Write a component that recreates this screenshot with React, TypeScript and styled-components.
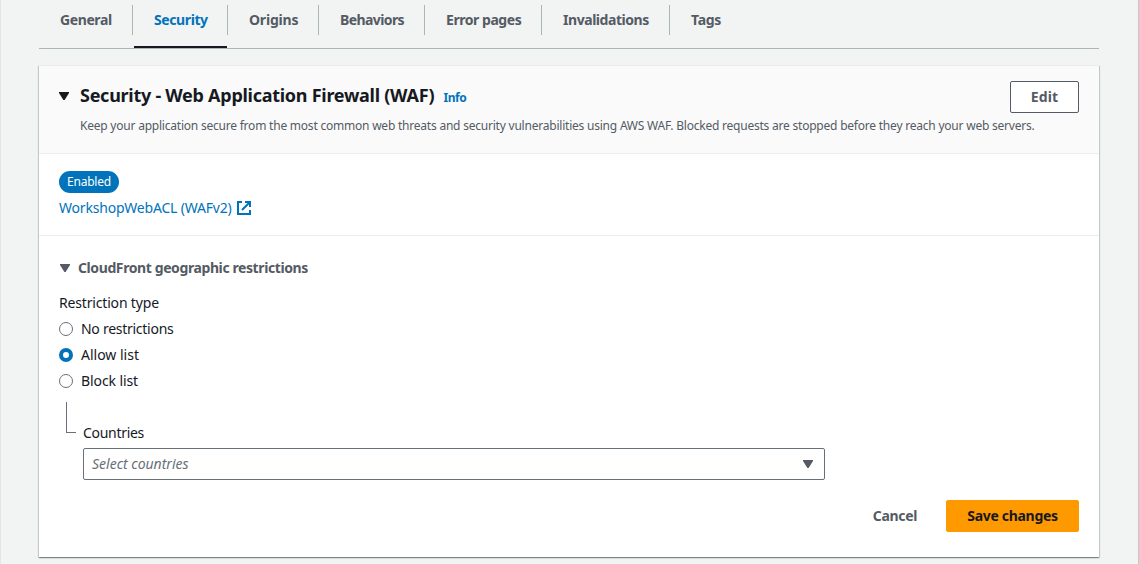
import React from "react";
import styled, { createGlobalStyle, css } from "styled-components";

const GlobalStyle = createGlobalStyle`
  *, *::before, *::after { box-sizing: border-box; }
  body {
    margin: 0;
    background: #f2f3f3;
    color: #16191f;
    font-family: "Noto Sans", "Open Sans", sans-serif;
    font-size: 14px;
    line-height: 22px;
  }
`;

const Page = styled.main`
  height: 564px;
  padding: 0 39px 0 38px;
  border-left: 1px solid #e3e6e6;
  border-right: 1px solid #c3c8c9;
  overflow: hidden;
`;

const Label = styled.span<{ $track?: number }>`
  white-space: nowrap;
  letter-spacing: ${(p) => p.$track ?? 0}px;
`;

const Tabs = styled.nav`
  display: flex;
  height: 49px;
  border-bottom: 1px solid #aab7b8;
`;

const Tab = styled.button<{ $width: number; $active?: boolean }>`
  display: flex;
  width: ${(p) => p.$width}px;
  height: 48px;
  padding: 5px 0 0;
  border: 0;
  background: none;
  font: inherit;
  font-weight: 700;
  color: ${(p) => (p.$active ? "#0073bb" : "#545b64")};
  position: relative;

  ${(p) =>
    p.$active &&
    css`
      &::after {
        content: "";
        position: absolute;
        left: 1px;
        right: 1px;
        bottom: 0;
        height: 2px;
        background: #16191f;
      }
    `}
`;

const TabText = styled.span<{ $last?: boolean }>`
  flex: 1;
  display: flex;
  align-items: center;
  height: 30px;
  padding-left: 21px;
  border-right: ${(p) => (p.$last ? "0" : "1px solid #aab7b8")};
`;

const Panel = styled.section`
  margin-top: 16px;
  height: 492px;
  border-top: 1px solid #eaeded;
  background: #fff;
  box-shadow: 0 1px 1px 0 rgba(0, 28, 36, 0.3), 1px 1px 1px 0 rgba(0, 28, 36, 0.15),
    -1px 1px 1px 0 rgba(0, 28, 36, 0.15);
`;

const PanelHeader = styled.header`
  display: flex;
  justify-content: space-between;
  height: 88px;
  padding: 15px 20px 0;
  border-bottom: 1px solid #eaeded;
  background: #fafafa;
`;

const HeaderMain = styled.div`
  display: flex;
  flex: 1;
  min-width: 0;
`;

const Caret = styled.svg<{ $top?: number; $left?: number }>`
  display: block;
  flex: none;
  width: 10px;
  height: 8px;
  margin-top: ${(p) => p.$top ?? 0}px;
  margin-left: ${(p) => p.$left ?? 0}px;
`;

const HeaderText = styled.div`
  margin-left: 11px;
`;

const TitleRow = styled.div`
  display: flex;
  align-items: baseline;
  gap: 9px;
`;

const Title = styled.h2`
  margin: 0;
  font-size: 18px;
  line-height: 28px;
  font-weight: 700;
`;

const InfoLink = styled.a`
  font-size: 12px;
  font-weight: 700;
  color: #0073bb;
`;

const Description = styled.p`
  margin: 6px 0 0;
  font-size: 12px;
  color: #545b64;
`;

const Button = styled.button<{ $kind: "normal" | "link" | "primary"; $width: number }>`
  flex: none;
  width: ${(p) => p.$width}px;
  height: 32px;
  padding: 0;
  border: 1px solid transparent;
  border-radius: 2px;
  font: inherit;
  font-weight: 700;
  color: #545b64;
  background: transparent;

  ${(p) =>
    p.$kind === "normal" &&
    css`
      border-color: #545b64;
      background: #fff;
    `}
  ${(p) =>
    p.$kind === "primary" &&
    css`
      border-color: #ff9900;
      background: #ff9900;
      color: #16191f;
    `}
`;

const Status = styled.div`
  display: flex;
  flex-direction: column;
  align-items: flex-start;
  gap: 4px;
  height: 82px;
  padding: 17px 20px 0;
  border-bottom: 1px solid #eaeded;
`;

const Badge = styled.span`
  width: 60px;
  height: 22px;
  border-radius: 11px;
  background: #0073bb;
  color: #fff;
  font-size: 12px;
  text-align: center;
`;

const AclLink = styled.a`
  display: flex;
  align-items: center;
  color: #0073bb;
`;

const AclName = styled.span`
  width: 178px;
`;

const Restrictions = styled.div`
  padding: 21px 20px 0;
`;

const SectionToggle = styled.div`
  display: flex;
  gap: 8px;
  font-weight: 700;
  color: #545b64;
`;

const GroupLabel = styled.div`
  margin-top: 13px;
`;

const RadioList = styled.div`
  display: flex;
  flex-direction: column;
  gap: 4px;
  margin-top: 4px;
`;

const RadioRow = styled.div`
  display: flex;
  align-items: center;
  gap: 8px;
`;

const Dot = styled.span<{ $checked?: boolean }>`
  width: 14px;
  height: 14px;
  border-radius: 50%;
  border: ${(p) => (p.$checked ? "4px solid #0073bb" : "1px solid #687078")};
  background: #fff;
`;

const Nested = styled.div`
  display: flex;
  margin-top: 10px;
  padding-left: 7px;
`;

const Elbow = styled.span`
  width: 10px;
  height: 31px;
  border-left: 1px solid #687078;
  border-bottom: 1px solid #687078;
`;

const Field = styled.div`
  margin: 20px 0 0 7px;
`;

const Select = styled.div`
  display: flex;
  align-items: center;
  justify-content: space-between;
  width: 742px;
  height: 32px;
  margin-top: 4px;
  padding: 0 11px 0 8px;
  border: 1px solid #687078;
  border-radius: 2px;
  font-style: italic;
  color: #687078;
`;

const Actions = styled.div`
  display: flex;
  justify-content: flex-end;
  gap: 8px;
  margin-top: 20px;
`;

const tabs = [
  { name: "General", width: 94, track: -0.4 },
  { name: "Security", width: 95, track: -0.4, active: true },
  { name: "Origins", width: 91, track: -0.2 },
  { name: "Behaviors", width: 106, track: -0.6 },
  { name: "Error pages", width: 117, track: -0.45 },
  { name: "Invalidations", width: 128, track: -0.45 },
  { name: "Tags", width: 90, track: -0.3 },
];

const options = [
  { name: "No restrictions", track: -0.27 },
  { name: "Allow list", track: 0, checked: true },
  { name: "Block list", track: -0.1 },
];

function DownCaret({ color, top, left }: { color: string; top?: number; left?: number }) {
  return (
    <Caret viewBox="0 0 10 8" $top={top} $left={left}>
      <path d="M0 0h10v1L5.6 8H4.4L0 1z" fill={color} />
    </Caret>
  );
}

function ExternalIcon() {
  return (
    <svg width="14" height="14" viewBox="0 0 14 14" fill="none" stroke="#0073bb" strokeWidth="2">
      <path d="M5 1H1v12h12V9" />
      <path d="M8 1h5v5M13 1L5 9" />
    </svg>
  );
}

export default function App() {
  return (
    <>
      <GlobalStyle />
      <Page>
        <Tabs>
          {tabs.map((t, i) => (
            <Tab key={t.name} $width={t.width} $active={t.active}>
              <TabText $last={i === tabs.length - 1}>
                <Label $track={t.track}>{t.name}</Label>
              </TabText>
            </Tab>
          ))}
        </Tabs>
        <Panel>
          <PanelHeader>
            <HeaderMain>
              <DownCaret color="#16191f" top={11} />
              <HeaderText>
                <TitleRow>
                  <Title>
                    <Label $track={-0.27}>Security - Web Application Firewall (WAF)</Label>
                  </Title>
                  <InfoLink>
                    <Label $track={-0.4}>Info</Label>
                  </InfoLink>
                </TitleRow>
                <Description>
                  <Label $track={-0.218}>
                    Keep your application secure from the most common web threats and security
                    vulnerabilities using AWS WAF. Blocked requests are stopped before they reach
                    your web servers.
                  </Label>
                </Description>
              </HeaderText>
            </HeaderMain>
            <Button $kind="normal" $width={69}>
              <Label $track={0.1}>Edit</Label>
            </Button>
          </PanelHeader>
          <Status>
            <Badge>
              <Label $track={-0.2}>Enabled</Label>
            </Badge>
            <AclLink>
              <AclName>
                <Label $track={-0.2}>WorkshopWebACL (WAFv2)</Label>
              </AclName>
              <ExternalIcon />
            </AclLink>
          </Status>
          <Restrictions>
            <SectionToggle>
              <DownCaret color="#545b64" top={7} left={1} />
              <Label $track={-0.4}>CloudFront geographic restrictions</Label>
            </SectionToggle>
            <GroupLabel>
              <Label $track={-0.17}>Restriction type</Label>
            </GroupLabel>
            <RadioList>
              {options.map((o) => (
                <RadioRow key={o.name}>
                  <Dot $checked={o.checked} />
                  <Label $track={o.track}>{o.name}</Label>
                </RadioRow>
              ))}
            </RadioList>
            <Nested>
              <Elbow />
              <Field>
                <Label $track={-0.3}>Countries</Label>
                <Select>
                  <Label $track={0}>Select countries</Label>
                  <DownCaret color="#545b64" />
                </Select>
              </Field>
            </Nested>
            <Actions>
              <Button $kind="link" $width={86}>
                <Label $track={-0.3}>Cancel</Label>
              </Button>
              <Button $kind="primary" $width={133}>
                <Label $track={-0.3}>Save changes</Label>
              </Button>
            </Actions>
          </Restrictions>
        </Panel>
      </Page>
    </>
  );
}
